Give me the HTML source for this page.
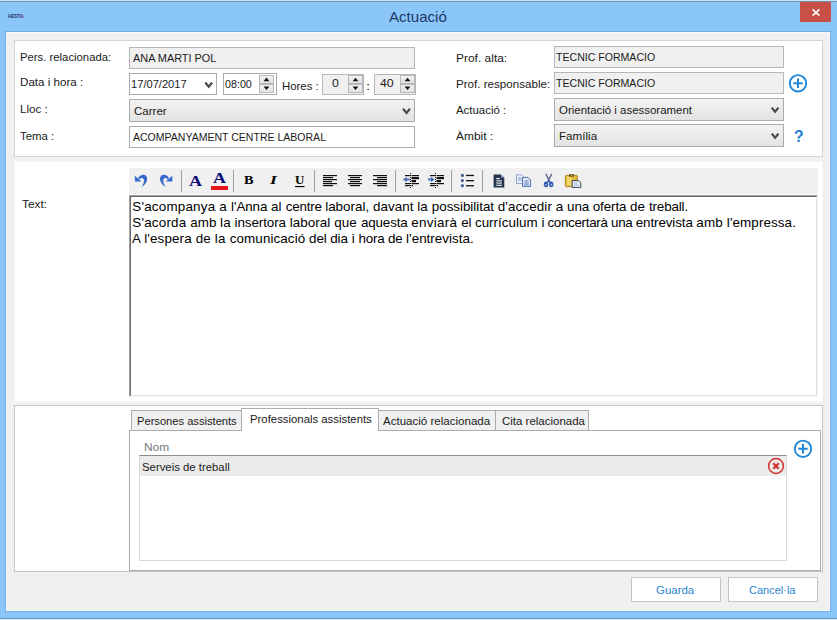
<!DOCTYPE html>
<html lang="ca"><head><meta charset="utf-8"><title>Actuació</title>
<style>
html,body{margin:0;padding:0}
body{width:837px;height:620px;position:relative;overflow:hidden;background:#8bc6fa;font-family:"Liberation Sans",sans-serif;font-size:12px;color:#1a1a1a}
.a{position:absolute;box-sizing:border-box}
.t{position:absolute;white-space:nowrap;transform-origin:0 50%;line-height:normal;font-family:"Liberation Sans",sans-serif}
.client{left:6px;top:32px;width:824px;height:579px;background:#f0f0f0;border:1px solid #f6faff}
.panel{background:#fff;border:1px solid #d3d3d3}
.ro{background:#f0f0f0;border:1px solid #b7b7b7}
.wf{background:#fff;border:1px solid #ababab}
.cb{background:linear-gradient(#f3f3f3,#e3e3e3);border:1px solid #acacac}
.sep{width:1px;background:#a0a0a0;top:170px;height:22px}
.tab{background:#f0f0f0;border:1px solid #acacac;border-bottom:none}
.btn{background:#fff;border:1px solid #c4c4c4}
.spb{background:linear-gradient(#f2f2f2,#e2e2e2);border:1px solid #b9b9b9}
svg{position:absolute;overflow:visible}
.rt{font-family:"Liberation Sans",sans-serif;font-size:13.4px;line-height:16px;color:#000;white-space:nowrap}

</style></head>
<body>
<!-- window chrome -->
<div class="a" style="left:0;top:0;width:837px;height:1px;background:#d3e4f5"></div>
<div class="a" style="left:0;top:1px;width:837px;height:1px;background:#6f8fb0"></div>
<div class="a" style="left:0;top:618px;width:837px;height:1px;background:#6e94bc"></div>
<div class="a" style="left:0;top:619px;width:837px;height:1px;background:#dcebf9"></div>
<div class="a" style="left:5px;top:31px;width:826px;height:581px;background:#76aee4"></div>
<div class="a client"></div>
<!-- close button -->
<div class="a" style="left:800px;top:2px;width:31px;height:20px;background:#c94f49"></div>
<svg style="left:812px;top:9px" width="8" height="7" viewBox="0 0 8 7"><path d="M0.6 0.3L7.4 6.7M7.4 0.3L0.6 6.7" stroke="#fff" stroke-width="1.6" fill="none"/></svg>
<!-- app logo -->
<span class="t" style="left:8px;top:13.2px;font-size:5px;font-weight:bold;color:#1f3a6a;letter-spacing:-0.3px;transform:scaleX(0.95)">HEST<span style="color:#6a3a7a">IA</span></span>

<!-- panel 1 -->
<div class="a panel" style="left:14px;top:40px;width:809px;height:117px"></div>
<div class="a ro" style="left:129px;top:47px;width:286px;height:22px"></div>
<div class="a wf" style="left:129px;top:73px;width:88px;height:22px"></div>
<div class="a wf" style="left:223px;top:73px;width:54px;height:22px"></div>
<div class="a ro" style="left:322px;top:74px;width:42px;height:21px"></div>
<div class="a ro" style="left:374px;top:74px;width:42px;height:21px"></div>
<div class="a cb" style="left:129px;top:99px;width:286px;height:23px"></div>
<div class="a wf" style="left:129px;top:126px;width:286px;height:22px"></div>

<div class="a ro" style="left:554px;top:46px;width:230px;height:22px"></div>
<div class="a ro" style="left:554px;top:72px;width:230px;height:22px"></div>
<div class="a cb" style="left:554px;top:98px;width:230px;height:23px"></div>
<div class="a cb" style="left:554px;top:124px;width:230px;height:23px"></div>

<!-- chevrons -->
<svg style="left:0;top:0" width="837" height="620" viewBox="0 0 837 620"><g stroke="#4a4a4a" stroke-width="2.2" fill="none">
<path d="M205.3 82.5L208.7 86.7L212.1 82.5"/>
<path d="M403.1 108.7L406.5 112.9L409.9 108.7"/>
<path d="M771.7 107.6L775.1 111.8L778.5 107.6"/>
<path d="M771.7 133.6L775.1 137.8L778.5 133.6"/>
</g></svg>
<!-- spinners -->
<div class="a spb" style="left:259px;top:75px;width:15px;height:9px"></div>
<div class="a spb" style="left:259px;top:84px;width:15px;height:9px"></div>
<div class="a spb" style="left:348px;top:75px;width:15px;height:9px"></div>
<div class="a spb" style="left:348px;top:84px;width:15px;height:9px"></div>
<div class="a spb" style="left:400px;top:75px;width:15px;height:9px"></div>
<div class="a spb" style="left:400px;top:84px;width:15px;height:9px"></div>
<svg style="left:0;top:0" width="837" height="620" viewBox="0 0 837 620">
 <g fill="#111">
  <path d="M263.6 81.2L266.5 77.6L269.4 81.2Z"/><path d="M263.6 86.4L266.5 90L269.4 86.4Z"/>
  <path d="M352.6 81.3L355.5 77.7L358.4 81.3Z"/><path d="M352.6 86.5L355.5 90.1L358.4 86.5Z"/>
  <path d="M404.6 81.3L407.5 77.7L410.4 81.3Z"/><path d="M404.6 86.5L407.5 90.1L410.4 86.5Z"/>
 </g>
 <!-- plus icon top -->
 <g stroke="#1f87d8" fill="none">
  <circle cx="798" cy="83.3" r="8.2" stroke-width="1.9"/>
  <path d="M793.3 83.3H802.7M798 78.6V88" stroke-width="2"/>
 </g>
</svg>
<span class="t" style="left:794px;top:126.6px;font-size:17px;font-weight:bold;color:#1f80d2;transform:scaleX(0.92)">?</span>

<!-- panel 2 -->
<div class="a" style="left:14px;top:161px;width:809px;height:241px;background:#fff;border:1px solid #f6f6f6"></div>
<div class="a" style="left:129px;top:168px;width:689px;height:26px;background:#f0f0f0"></div>
<div class="a sep" style="left:181px"></div>
<div class="a sep" style="left:233px"></div>
<div class="a sep" style="left:314px"></div>
<div class="a sep" style="left:395px"></div>
<div class="a sep" style="left:451px"></div>
<div class="a sep" style="left:482px"></div>
<!-- toolbar icons -->
<svg style="left:0;top:0" width="837" height="620" viewBox="0 0 837 620">
 <!-- undo -->
 <g fill="#3768cc">
  <path d="M138.2 178.2 C139.4 175.6 142 174.2 144.2 174.8 C147.2 175.6 147.8 179 146.5 181.7 C145.5 183.9 143.8 185.7 141.7 186.8 C143 184.8 144 182.6 144 180.5 C144 178.5 142.5 177.4 140.6 178.2 L139.6 179.6 Z"/><path d="M134.9 175.8 L134.9 181.6 L141.4 181.6 Z"/>
  <path d="M 169.0 178.2 C 167.8 175.6 165.2 174.2 163.0 174.8 C 160.0 175.6 159.4 179.0 160.7 181.7 C 161.7 183.9 163.4 185.7 165.5 186.8 C 164.2 184.8 163.2 182.6 163.2 180.5 C 163.2 178.5 164.7 177.4 166.6 178.2 L 167.6 179.6 Z"/><path d="M 172.3 175.8 L 172.3 181.6 L 165.8 181.6 Z"/>
 </g>
 <!-- red bar -->
 <rect x="211" y="186" width="17" height="4" fill="#e8141c"/>
 <!-- underline for U -->
 <rect x="295" y="186" width="9.5" height="1.1" fill="#000"/>
 <!-- align icons -->
 <g fill="#111"><rect x="323" y="175" width="14" height="1.2"/><rect x="323" y="177" width="10" height="1.2"/><rect x="323" y="179" width="14" height="1.2"/><rect x="323" y="181" width="9" height="1.2"/><rect x="323" y="183" width="14" height="1.2"/><rect x="323" y="185" width="10" height="1.2"/><rect x="348.0" y="175" width="14" height="1.2"/><rect x="350.0" y="177" width="10" height="1.2"/><rect x="348.0" y="179" width="14" height="1.2"/><rect x="350.0" y="181" width="10" height="1.2"/><rect x="348.0" y="183" width="14" height="1.2"/><rect x="350.0" y="185" width="10" height="1.2"/><rect x="373" y="175" width="14" height="1.2"/><rect x="377" y="177" width="10" height="1.2"/><rect x="373" y="179" width="14" height="1.2"/><rect x="377" y="181" width="10" height="1.2"/><rect x="373" y="183" width="14" height="1.2"/><rect x="377" y="185" width="10" height="1.2"/></g>
 <!-- outdent / indent -->
 <g fill="#111">
  <rect x="405" y="175" width="5" height="1.2"/><rect x="411.5" y="175" width="7.5" height="1.2"/>
  <rect x="411.5" y="177" width="7.5" height="2.2"/>
  <rect x="411.5" y="180" width="4.5" height="2.2"/>
  <rect x="405" y="183" width="5" height="1.2"/><rect x="411.5" y="183" width="7.5" height="1.2"/>
  <rect x="405" y="185" width="5" height="1.2"/><rect x="411.5" y="185" width="1.5" height="1.2"/>
  <rect x="430" y="175" width="5" height="1.2"/><rect x="436.5" y="175" width="7.5" height="1.2"/>
  <rect x="436.5" y="177" width="7.5" height="2.2"/>
  <rect x="436.5" y="180" width="4.5" height="2.2"/>
  <rect x="430" y="183" width="5" height="1.2"/><rect x="436.5" y="183" width="7.5" height="1.2"/>
  <rect x="430" y="185" width="5" height="1.2"/><rect x="436.5" y="185" width="1.5" height="1.2"/>
 </g>
 <path d="M410.5 173V188M435.5 173V188" stroke="#111" stroke-width="1" stroke-dasharray="1 1" fill="none"/>
 <path d="M403 179.5L406.6 176.8V178.6H409.6V180.4H406.6V182.2Z" fill="#4a6cb4"/>
 <path d="M434.6 179.5L431 176.8V178.6H428V180.4H431V182.2Z" fill="#4a6cb4"/>
 <!-- bullets -->
 <g fill="#4a5c94"><circle cx="462.4" cy="175.4" r="1.6"/><circle cx="462.4" cy="180.6" r="1.6"/><circle cx="462.4" cy="185.7" r="1.6"/></g>
 <g fill="#111"><rect x="466" y="174.8" width="8" height="1.3"/><rect x="466" y="180" width="8" height="1.3"/><rect x="466" y="185.1" width="8" height="1.3"/></g>
 <!-- doc -->
 <path d="M493.6 174.5H501L504.3 177.8V187.6H493.6Z" fill="#23344f"/>
 <path d="M501 174.5V177.8H504.3Z" fill="#8a98b2"/>
 <g fill="#f4f6fa"><rect x="496.3" y="178" width="3.6" height="1.1"/><rect x="496.3" y="180.3" width="5.6" height="1.1"/><rect x="496.3" y="182.5" width="5.6" height="1.1"/><rect x="496.3" y="184.7" width="5.6" height="1.1"/></g>
 <!-- copy -->
 <path d="M516.5 174.8H521.5L523.8 177.1V183.4H516.5Z" fill="#eef3fb" stroke="#7f98c8" stroke-width="0.9"/>
 <path d="M522.5 177.4H528L530.6 180V186.4H522.5Z" fill="#dde7f8" stroke="#5473b4" stroke-width="1"/>
 <g fill="#5e7dbc"><rect x="518" y="177.6" width="3.5" height="0.8"/><rect x="518" y="179.6" width="3.5" height="0.8"/><rect x="524.2" y="180.6" width="4.6" height="0.9"/><rect x="524.2" y="182.6" width="4.6" height="0.9"/><rect x="524.2" y="184.4" width="4.6" height="0.9"/></g>
 <!-- scissors -->
 <g stroke="#566487" stroke-width="1.3" fill="none" stroke-linecap="round"><path d="M546.1 174.4L549.6 181.6M551.4 174.4L547.9 181.6"/></g>
 <g fill="#2f58b2"><path d="M548.7 179.6L550.6 182.2L547 182.2Z"/><ellipse cx="546" cy="184.3" rx="2.2" ry="2.9"/><ellipse cx="551.2" cy="184.3" rx="2.2" ry="2.9"/></g>
 <g fill="#d6e2f6"><circle cx="545.8" cy="184.8" r="0.75"/><circle cx="551.4" cy="184.8" r="0.75"/></g>
 <!-- paste -->
 <rect x="565.4" y="175.4" width="12" height="11.2" rx="0.8" fill="#e3b93a" stroke="#a87c14" stroke-width="0.9"/>
 <rect x="567" y="177" width="4.2" height="8.4" fill="#f5de7a" opacity="0.8"/>
 <rect x="569.2" y="174" width="4.6" height="2.6" fill="#5b4a20"/>
 <rect x="570.6" y="174.4" width="1.8" height="1.2" fill="#e8d8a0"/>
 <path d="M572.2 180.6H578.4L580.8 183V187.4H572.2Z" fill="#eef3fb" stroke="#3c4656" stroke-width="1"/>
 <g fill="#7f98c8"><rect x="573.8" y="182.6" width="3.6" height="0.8"/><rect x="573.8" y="184.6" width="5.2" height="0.8"/></g>
</svg>
<span class="t" style="left:188.8px;top:172.6px;font:bold 15px 'Liberation Serif',serif;color:#0b0b78;transform:scaleX(1.2)">A</span>
<span class="t" style="left:213.2px;top:170.2px;font:bold 15px 'Liberation Serif',serif;color:#0b0b78;transform:scaleX(1.2)">A</span>
<span class="t" style="left:244.4px;top:172.1px;font:bold 13px 'Liberation Serif',serif;color:#000;transform:scaleX(1.1)">B</span>
<span class="t" style="left:270.4px;top:172.1px;font:italic bold 13px 'Liberation Serif',serif;color:#000;transform:scaleX(1.35)">I</span>
<span class="t" style="left:295px;top:172.4px;font:bold 13px 'Liberation Serif',serif;color:#000">U</span>
<!-- rich text -->
<div class="a" style="left:129px;top:195px;width:689px;height:202px;background:#fff;border-top:1px solid #a0a0a0;border-left:1px solid #a0a0a0;border-right:1px solid #f4f4f4;border-bottom:1px solid #f4f4f4"></div>
<div class="a" style="left:130px;top:196px;width:687px;height:200px;background:#fff;border-top:1px solid #696969;border-left:1px solid #696969;border-right:1px solid #e3e3e3;border-bottom:1px solid #e3e3e3"></div>
<div class="a rt" style="left:132px;top:198.5px"><span style="position:relative;left:0.3px"><span style="letter-spacing:0.211px">S'acompanya </span><span style="letter-spacing:0.319px">a </span><span style="letter-spacing:-0.095px">l'Anna </span><span style="letter-spacing:0.186px">al </span><span style="letter-spacing:-0.210px">centre </span><span style="letter-spacing:0.019px">laboral, </span><span style="letter-spacing:0.048px">davant </span><span style="letter-spacing:0.152px">la </span><span style="letter-spacing:-0.027px">possibilitat </span><span style="letter-spacing:0.119px">d'accedir </span><span style="letter-spacing:0.019px">a </span><span style="letter-spacing:-0.081px">una </span><span style="letter-spacing:-0.110px">oferta </span><span style="letter-spacing:0.119px">de </span><span style="letter-spacing:-0.144px">treball.</span></span><br><span style="position:relative;left:0.3px"><span style="letter-spacing:0.205px">S'acorda </span><span style="letter-spacing:-0.006px">amb </span><span style="letter-spacing:0.127px">la </span><span style="letter-spacing:-0.076px">insertora </span><span style="letter-spacing:0.069px">laboral </span><span style="letter-spacing:0.169px">que </span><span style="letter-spacing:-0.119px">aquesta </span><span style="letter-spacing:0.281px">enviarà </span><span style="letter-spacing:-0.139px">el </span><span style="letter-spacing:0.030px">currículum </span><span style="letter-spacing:-0.406px">i </span><span style="letter-spacing:-0.297px">concertarà </span><span style="letter-spacing:-0.356px">una </span><span style="letter-spacing:-0.106px">entrevista </span><span style="letter-spacing:0.169px">amb </span><span style="letter-spacing:0.103px">l'empressa.</span></span><br><span style="position:relative;left:0px"><span style="letter-spacing:0.115px">A </span><span style="letter-spacing:0.148px">l'espera </span><span style="letter-spacing:0.182px">de </span><span style="letter-spacing:0.248px">la </span><span style="letter-spacing:0.098px">comunicació </span><span style="letter-spacing:-0.135px">del </span><span style="letter-spacing:-0.010px">dia </span><span style="letter-spacing:0.015px">i </span><span style="letter-spacing:-0.185px">hora </span><span style="letter-spacing:-0.185px">de </span><span style="letter-spacing:0.015px">l'entrevista.</span></span></div>

<!-- panel 3 -->
<div class="a" style="left:14px;top:405px;width:809px;height:167px;background:#fff;border:1px solid #c6c6c6"></div>
<div class="a" style="left:129px;top:430px;width:692px;height:141px;background:#fff;border:1px solid #acacac"></div>
<div class="a tab" style="left:131px;top:410px;width:111px;height:20px"></div>
<div class="a tab" style="left:378px;top:410px;width:118px;height:20px"></div>
<div class="a tab" style="left:495px;top:410px;width:94px;height:20px"></div>
<div class="a tab" style="left:241px;top:408px;width:138px;height:23px;background:#fff"></div>
<!-- grid -->
<div class="a" style="left:139px;top:455px;width:648px;height:106px;background:#fff;border:1px solid #dadada;border-top:1px solid #8c8c8c"></div>
<div class="a" style="left:140px;top:456px;width:646px;height:20px;background:#ebebeb"></div>
<svg style="left:767px;top:457px" width="18" height="18" viewBox="0 0 18 18"><circle cx="9" cy="9" r="7.4" fill="none" stroke="#d6322b" stroke-width="1.5"/><path d="M6.3 6.3L11.7 11.7M11.7 6.3L6.3 11.7" stroke="#d6322b" stroke-width="2.2" fill="none"/></svg>

<svg style="left:0;top:0" width="837" height="620" viewBox="0 0 837 620"><g stroke="#1f87d8" fill="none">
  <circle cx="803" cy="448.8" r="8.2" stroke-width="1.9"/>
  <path d="M798.3 448.8H807.7M803 444.1V453.5" stroke-width="2"/>
</g></svg>
<!-- buttons -->
<div class="a btn" style="left:631px;top:577px;width:90px;height:25px"></div>
<div class="a btn" style="left:728px;top:577px;width:90px;height:25px"></div>

<span id="title" class="t" style="left:388.8px;top:8.42px;font-size:15px;color:#1c3a63;transform:scaleX(1.0044);">Actuació</span>
<span id="l1" class="t" style="left:19.8px;top:51.32px;font-size:10.7px;color:#1a1a1a;transform:scaleX(1.0585);">Pers. relacionada:</span>
<span id="l2" class="t" style="left:19.8px;top:76.32px;font-size:10.7px;color:#1a1a1a;transform:scaleX(1.0856);">Data i hora :</span>
<span id="l3" class="t" style="left:19.8px;top:103.32px;font-size:10.7px;color:#1a1a1a;transform:scaleX(1.0843);">Lloc :</span>
<span id="l4" class="t" style="left:19.8px;top:130.32px;font-size:10.7px;color:#1a1a1a;transform:scaleX(1.0661);">Tema :</span>
<span id="f1" class="t" style="left:132.6px;top:52.32px;font-size:10.7px;color:#1a1a1a;transform:scaleX(1.0200);">ANA MARTI POL</span>
<span id="f2" class="t" style="left:131.3px;top:78.32px;font-size:10.7px;color:#1a1a1a;transform:scaleX(1.0411);">17/07/2017</span>
<span id="f2b" class="t" style="left:225.0px;top:78.32px;font-size:10.7px;color:#1a1a1a;transform:scaleX(1.0019);">08:00</span>
<span id="hores" class="t" style="left:281.6px;top:80.32px;font-size:10.7px;color:#1a1a1a;transform:scaleX(1.0652);">Hores :</span>
<span id="h0" class="t" style="left:332.1px;top:77.32px;font-size:10.7px;color:#1a1a1a;transform:scaleX(1.1423);">0</span>
<span id="colon" class="t" style="left:366.3px;top:80.32px;font-size:10.7px;color:#1a1a1a;transform:scaleX(1.4073);">:</span>
<span id="h40" class="t" style="left:379.8px;top:77.32px;font-size:10.7px;color:#1a1a1a;transform:scaleX(1.1522);">40</span>
<span id="f3" class="t" style="left:133.6px;top:105.32px;font-size:10.7px;color:#1a1a1a;transform:scaleX(1.0793);">Carrer</span>
<span id="f4" class="t" style="left:132.7px;top:131.32px;font-size:10.7px;color:#1a1a1a;transform:scaleX(0.9848);">ACOMPANYAMENT CENTRE LABORAL</span>
<span id="r1" class="t" style="left:455.5px;top:52.12px;font-size:10.7px;color:#1a1a1a;transform:scaleX(1.1191);">Prof. alta:</span>
<span id="r2" class="t" style="left:455.5px;top:77.72px;font-size:10.7px;color:#1a1a1a;transform:scaleX(1.0859);">Prof. responsable:</span>
<span id="r3" class="t" style="left:455.5px;top:104.32px;font-size:10.7px;color:#1a1a1a;transform:scaleX(1.0695);">Actuació :</span>
<span id="r4" class="t" style="left:455.5px;top:130.32px;font-size:10.7px;color:#1a1a1a;transform:scaleX(1.1183);">Àmbit :</span>
<span id="g1" class="t" style="left:556.3px;top:51.32px;font-size:10.7px;color:#1a1a1a;transform:scaleX(0.9886);">TECNIC FORMACIO</span>
<span id="g2" class="t" style="left:556.3px;top:77.32px;font-size:10.7px;color:#1a1a1a;transform:scaleX(0.9886);">TECNIC FORMACIO</span>
<span id="g3" class="t" style="left:558.7px;top:104.32px;font-size:10.7px;color:#1a1a1a;transform:scaleX(1.0712);">Orientació i asessorament</span>
<span id="g4" class="t" style="left:559.3px;top:130.32px;font-size:10.7px;color:#1a1a1a;transform:scaleX(1.0900);">Família</span>
<span id="tx" class="t" style="left:21.6px;top:198.32px;font-size:10.7px;color:#1a1a1a;transform:scaleX(1.1161);">Text:</span>
<span id="tab1" class="t" style="left:137.2px;top:415.32px;font-size:10.7px;color:#1a1a1a;transform:scaleX(1.0424);">Persones assistents</span>
<span id="tab2" class="t" style="left:249.6px;top:413.32px;font-size:10.7px;color:#1a1a1a;transform:scaleX(1.0623);">Professionals assistents</span>
<span id="tab3" class="t" style="left:382.8px;top:415.32px;font-size:10.7px;color:#1a1a1a;transform:scaleX(1.0803);">Actuació relacionada</span>
<span id="tab4" class="t" style="left:501.8px;top:415.32px;font-size:10.7px;color:#1a1a1a;transform:scaleX(1.0734);">Cita relacionada</span>
<span id="nom" class="t" style="left:143.8px;top:441.32px;font-size:10.7px;color:#7a7a7a;transform:scaleX(1.1161);">Nom</span>
<span id="row" class="t" style="left:142.1px;top:461.32px;font-size:10.7px;color:#1a1a1a;transform:scaleX(1.0620);">Serveis de treball</span>
<span id="b1" class="t" style="left:655.9px;top:584.32px;font-size:10.7px;color:#2b86d2;transform:scaleX(1.0713);">Guarda</span>
<span id="b2" class="t" style="left:748.8px;top:584.32px;font-size:10.7px;color:#2b86d2;transform:scaleX(1.0298);">Cancel·la</span>
</body></html>
